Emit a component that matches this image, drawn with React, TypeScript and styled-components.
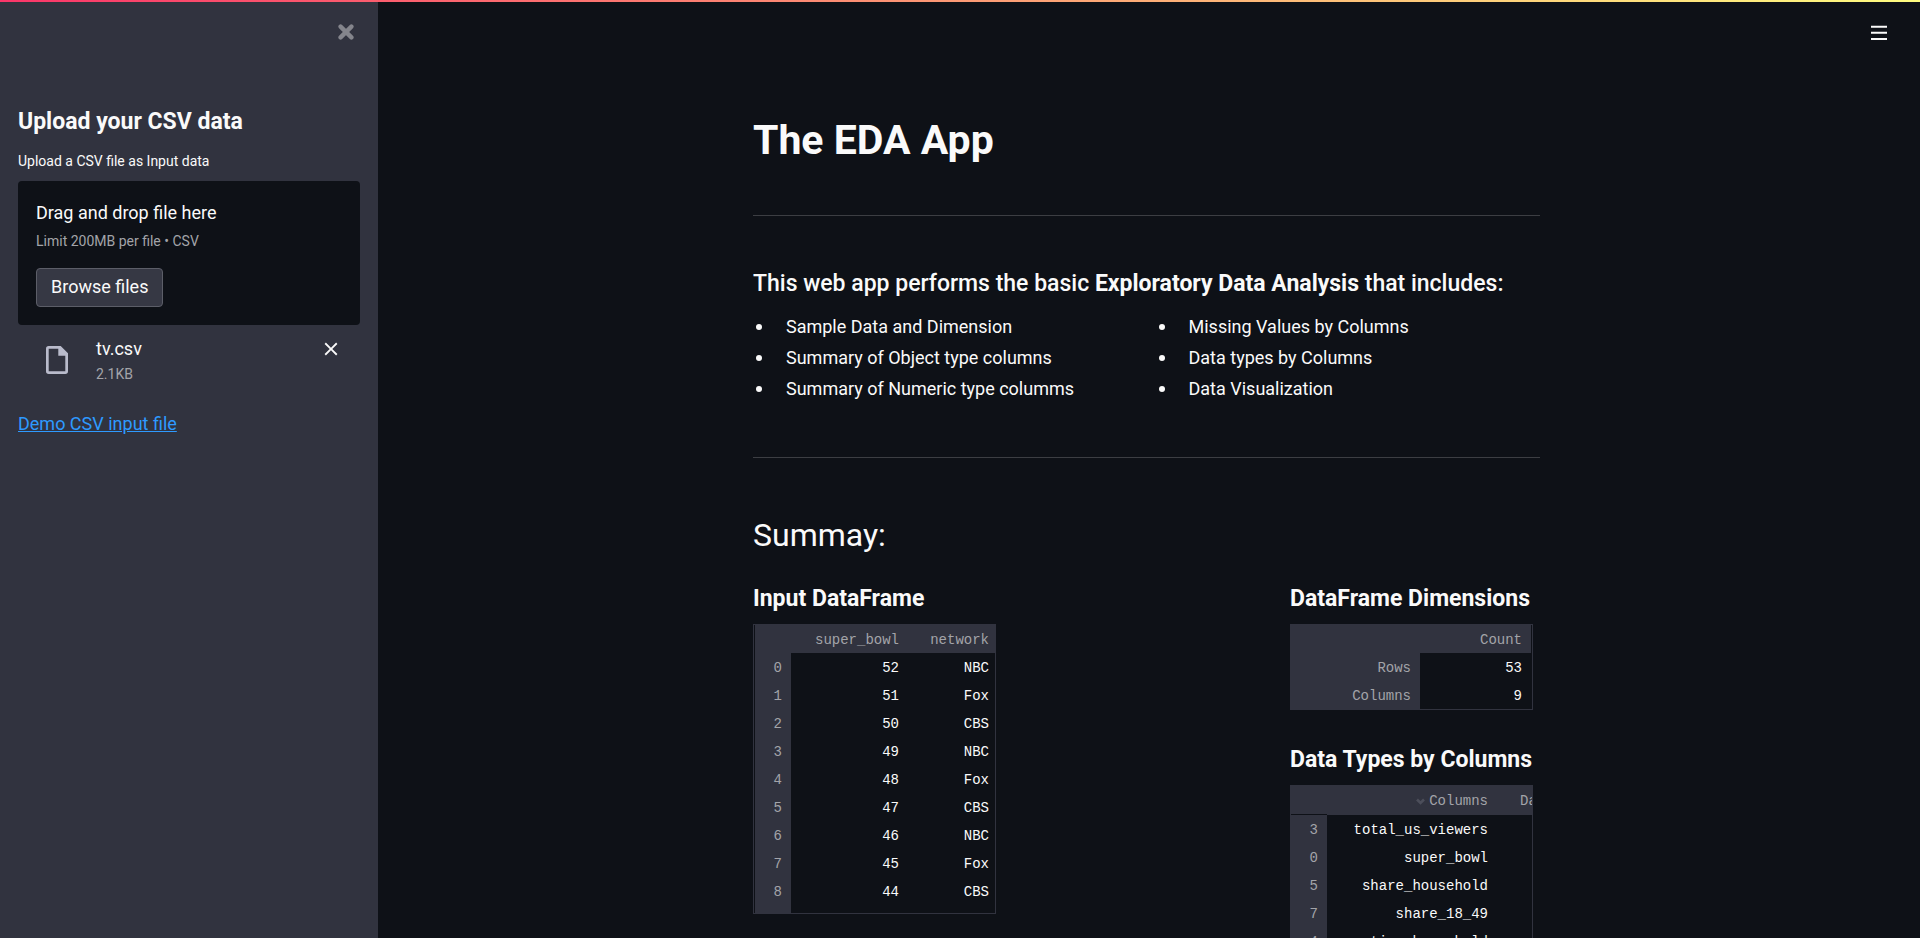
import React, { useRef } from "react";
import styled, { createGlobalStyle } from "styled-components";

const color = {
  page: "#0e1117",
  panel: "#31333f",
  button: "#363844",
  text: "#fafafa",
  faded: "#a3a4a9",
  rule: "#3c3e43",
  outline: "#5c5e68",
  link: "#2e9aff",
};

const GlobalStyle = createGlobalStyle`
  *, *::before, *::after { box-sizing: border-box; }
  body {
    margin: 0;
    background: ${color.page};
    color: ${color.text};
    font-family: Roboto, "Liberation Sans", sans-serif;
    font-size: 18px;
    line-height: 28px;
  }
  h1, h2, h3, p, ul { margin: 0; padding: 0; }
`;

const Shell = styled.div`
  display: flex;
  height: 100vh;
  overflow: hidden;
`;

const Decoration = styled.div`
  position: absolute;
  top: 0;
  left: 0;
  right: 0;
  height: 2px;
  background: linear-gradient(90deg, #fa3669, #fffd80);
`;

const IconButton = styled.button`
  display: flex;
  padding: 0;
  border: 0;
  background: none;
  color: inherit;
  cursor: pointer;
`;

/* Sidebar */

const Sidebar = styled.aside`
  flex: 0 0 378px;
  padding: 24px 18px;
  background: ${color.panel};
`;

const SidebarTop = styled.div`
  display: flex;
  justify-content: flex-end;
  padding-right: 6px;
  margin-bottom: 67px;
  color: #84858c;
`;

const Heading = styled.h3<{ $weight?: number }>`
  font-size: 23px;
  font-weight: ${(p) => p.$weight ?? 700};
  line-height: 30px;
  white-space: nowrap;
`;

const UploadLabel = styled.label`
  display: block;
  margin: 14px 0 10px;
  font-size: 14px;
  line-height: 20px;
`;

const Dropzone = styled.section`
  display: flex;
  flex-direction: column;
  align-items: flex-start;
  padding: 18px;
  border-radius: 4px;
  background: ${color.page};
`;

const Hint = styled.p`
  margin: 4px 0 17px;
  color: ${color.faded};
  font-size: 14px;
  line-height: 20px;
`;

const BrowseButton = styled.button`
  padding: 4px 14px 5px;
  border: 1px solid ${color.outline};
  border-radius: 4px;
  background: ${color.button};
  color: ${color.text};
  font: inherit;
  cursor: pointer;
`;

const FileRow = styled.div`
  display: flex;
  align-items: center;
  gap: 28px;
  padding: 10px 18px 0 28px;
  margin-bottom: 25px;
`;

const FileInfo = styled.div`
  flex: 1;
`;

const FileSize = styled.div`
  color: ${color.faded};
  font-size: 14px;
  line-height: 22px;
`;

const RemoveButton = styled(IconButton)`
  align-self: flex-start;
  padding: 3px 0;
`;

const DemoLink = styled.a`
  color: ${color.link};
`;

/* Main page */

const Main = styled.main`
  flex: 1;
  min-width: 0;
  padding-right: 5px;
  overflow-y: auto;
  scrollbar-width: none;
`;

const Toolbar = styled.header`
  display: flex;
  justify-content: flex-end;
  align-items: center;
  height: 65px;
  padding-right: 28px;
`;

const Content = styled.div`
  max-width: 787px;
  margin: 0 auto;
  padding-top: 50px;
`;

const Title = styled.h1`
  font-size: 41px;
  font-weight: 700;
  line-height: 50px;
`;

const Rule = styled.hr`
  height: 1px;
  margin: 50px 0 53px;
  border: 0;
  background: ${color.rule};
`;

const Lists = styled.div`
  display: grid;
  grid-template-columns: 1fr 1fr;
  gap: 18px;
  padding: 12px 0 3px;
`;

const List = styled.ul`
  list-style: none;
`;

const Item = styled.li`
  display: flex;
  align-items: center;
  gap: 24px;
  padding-left: 3px;
  line-height: 31px;

  &::before {
    content: "";
    width: 6px;
    height: 6px;
    border-radius: 50%;
    background: ${color.text};
  }
`;

const SectionTitle = styled.h2`
  font-size: 32px;
  font-weight: 400;
  line-height: 48px;
`;

const Panels = styled.div`
  display: flex;
  justify-content: space-between;
  margin-top: 25px;
`;

const Column = styled.div`
  display: flex;
  flex-direction: column;
  gap: 35px;
  width: 250px;
`;

const Panel = styled.section`
  display: flex;
  flex-direction: column;
  gap: 10px;
`;

/* Data frames */

const Frame = styled.div<{ $height?: number; $inset?: boolean }>`
  width: 243px;
  height: ${(p) => (p.$height ? `${p.$height}px` : "auto")};
  padding-left: ${(p) => (p.$inset ? 1 : 0)}px;
  border: 1px solid ${color.panel};
  overflow: hidden;
`;

const Grid = styled.table<{ $width: number; $divided?: boolean }>`
  width: ${(p) => p.$width}px;
  table-layout: fixed;
  border-collapse: separate;
  border-spacing: 0;
  font-family: "Liberation Mono", monospace;
  font-size: 14px;
  line-height: 26px;

  thead > tr > * {
    border-bottom: ${(p) => (p.$divided ? 1 : 0)}px solid ${color.panel};
  }
  thead > tr > :first-child {
    border-bottom-color: ${color.page};
  }
`;

const Col = styled.col<{ $width: number }>`
  width: ${(p) => p.$width}px;
`;

const HeadCell = styled.th`
  height: 28px;
  padding: 2px 9px 0;
  background: ${color.panel};
  color: ${color.faded};
  font-weight: 400;
  text-align: right;
  white-space: nowrap;
`;

const Cell = styled.td`
  padding: 2px 9px 0;
  text-align: right;
  white-space: nowrap;
`;

const SortIcon = styled.svg`
  margin-right: 4px;
  color: #4c4e5a;
`;

type DataFrameProps = {
  columns: string[];
  widths: number[];
  rows: string[][];
  height?: number;
  inset?: boolean;
  sorted?: string;
};

function DataFrame({ columns, widths, rows, height, inset, sorted }: DataFrameProps) {
  return (
    <Frame $height={height} $inset={inset}>
      <Grid $width={widths.reduce((a, b) => a + b, 0)} $divided={Boolean(sorted)}>
        <colgroup>
          {widths.map((w, i) => (
            <Col key={i} $width={w} />
          ))}
        </colgroup>
        <thead>
          <tr>
            <HeadCell as="td" />
            {columns.map((c) => (
              <HeadCell key={c} scope="col">
                {c === sorted && (
                  <SortIcon width="9" height="7" viewBox="0 0 9 7" aria-hidden="true">
                    <path d="M1 1.5 4.5 5 8 1.5" fill="none" stroke="currentColor" strokeWidth="2.6" />
                  </SortIcon>
                )}
                {c}
              </HeadCell>
            ))}
          </tr>
        </thead>
        <tbody>
          {rows.map(([index, ...cells]) => (
            <tr key={index}>
              <HeadCell scope="row">{index}</HeadCell>
              {cells.map((v, i) => (
                <Cell key={i}>{v}</Cell>
              ))}
            </tr>
          ))}
        </tbody>
      </Grid>
    </Frame>
  );
}

const games = [
  ["0", "52", "NBC"],
  ["1", "51", "Fox"],
  ["2", "50", "CBS"],
  ["3", "49", "NBC"],
  ["4", "48", "Fox"],
  ["5", "47", "CBS"],
  ["6", "46", "NBC"],
  ["7", "45", "Fox"],
  ["8", "44", "CBS"],
  ["", "", ""],
];

const types = [
  ["3", "total_us_viewers", ""],
  ["0", "super_bowl", ""],
  ["5", "share_household", ""],
  ["7", "share_18_49", ""],
  ["4", "rating_household", ""],
];

export default function App() {
  const fileInput = useRef<HTMLInputElement>(null);

  return (
    <>
      <GlobalStyle />
      <Shell>
        <Sidebar>
          <SidebarTop>
            <IconButton aria-label="Close sidebar">
              <svg width="16" height="16" viewBox="0 0 16 16" aria-hidden="true">
                <path
                  d="M2.6 2.6 13.4 13.4M13.4 2.6 2.6 13.4"
                  stroke="currentColor"
                  strokeWidth="4.4"
                  strokeLinecap="round"
                />
              </svg>
            </IconButton>
          </SidebarTop>
          <Heading as="h2">Upload your CSV data</Heading>
          <UploadLabel htmlFor="csv-file">Upload a CSV file as Input data</UploadLabel>
          <Dropzone>
            <p>Drag and drop file here</p>
            <Hint>Limit 200MB per file • CSV</Hint>
            <input id="csv-file" ref={fileInput} type="file" accept=".csv" hidden />
            <BrowseButton type="button" onClick={() => fileInput.current?.click()}>
              Browse files
            </BrowseButton>
          </Dropzone>
          <FileRow>
            <svg width="22" height="28" viewBox="0 0 22 28" aria-hidden="true">
              <path
                fill="#b9bbcb"
                fillRule="evenodd"
                d="M2.7 0H14.7L22 7.3V25.3A2.7 2.7 0 0 1 19.3 28H2.7A2.7 2.7 0 0 1 0 25.3V2.7A2.7 2.7 0 0 1 2.7 0ZM2.7 2.7V25.3H19.3V9.7H12.3V2.7Z"
              />
            </svg>
            <FileInfo>
              <div>tv.csv</div>
              <FileSize>2.1KB</FileSize>
            </FileInfo>
            <RemoveButton aria-label="Remove tv.csv">
              <svg width="22" height="22" viewBox="0 0 24 24" fill="currentColor" aria-hidden="true">
                <path d="M19 6.41 17.59 5 12 10.59 6.41 5 5 6.41 10.59 12 5 17.59 6.41 19 12 13.41 17.59 19 19 17.59 13.41 12z" />
              </svg>
            </RemoveButton>
          </FileRow>
          <DemoLink href="#demo">Demo CSV input file</DemoLink>
        </Sidebar>

        <Main>
          <Toolbar>
            <IconButton aria-label="Menu">
              <svg width="16" height="16" viewBox="0 0 16 16" fill="currentColor" aria-hidden="true">
                <path d="M0 .7h16v2H0zM0 6.7h16v2H0zM0 13h16v2H0z" />
              </svg>
            </IconButton>
          </Toolbar>
          <Content>
            <Title>The EDA App</Title>
            <Rule />
            <Heading $weight={500}>
              This web app performs the basic <strong>Exploratory Data Analysis</strong> that includes:
            </Heading>
            <Lists>
              <List>
                <Item>Sample Data and Dimension</Item>
                <Item>Summary of Object type columns</Item>
                <Item>Summary of Numeric type columms</Item>
              </List>
              <List>
                <Item>Missing Values by Columns</Item>
                <Item>Data types by Columns</Item>
                <Item>Data Visualization</Item>
              </List>
            </Lists>
            <Rule />
            <SectionTitle>Summay:</SectionTitle>
            <Panels>
              <Column>
                <Panel>
                  <Heading>Input DataFrame</Heading>
                  <DataFrame
                    columns={["super_bowl", "network"]}
                    widths={[36, 117, 90]}
                    rows={games}
                    height={290}
                    inset
                  />
                </Panel>
              </Column>
              <Column>
                <Panel>
                  <Heading>DataFrame Dimensions</Heading>
                  <DataFrame
                    columns={["Count"]}
                    widths={[129, 111]}
                    rows={[
                      ["Rows", "53"],
                      ["Columns", "9"],
                    ]}
                  />
                </Panel>
                <Panel>
                  <Heading>Data Types by Columns</Heading>
                  <DataFrame
                    columns={["Columns", "Data Types"]}
                    widths={[36, 170, 116]}
                    rows={types}
                    sorted="Columns"
                  />
                </Panel>
              </Column>
            </Panels>
          </Content>
        </Main>
      </Shell>
      <Decoration />
    </>
  );
}
